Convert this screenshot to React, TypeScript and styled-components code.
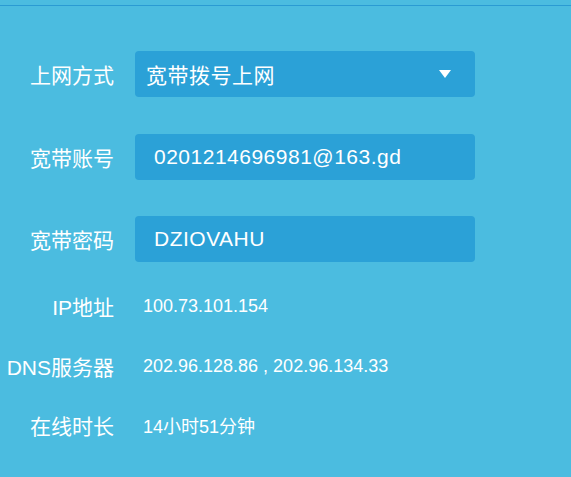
import React from "react";
import styled, { createGlobalStyle } from "styled-components";

const GlobalStyle = createGlobalStyle`
  html, body {
    margin: 0;
    padding: 0;
    background: #4bbce0;
  }
  body {
    width: 571px;
    height: 477px;
    overflow: hidden;
    font-family: "Liberation Sans", "Noto Sans CJK SC", sans-serif;
    color: #ffffff;
  }
`;

const ScPage = styled.div`
  width: 571px;
  height: 477px;
  background: #4bbce0;
  padding-top: 5px;
  box-sizing: border-box;
`;

const ScTopLine = styled.div`
  height: 1px;
  background: #2a9bd3;
`;

const ScForm = styled.div`
  display: flex;
  flex-direction: column;
`;

const ScRow = styled.div<{ $top: number; $height: number }>`
  display: grid;
  grid-template-columns: 114px 340px;
  column-gap: 21px;
  align-items: center;
  margin-top: ${(p) => p.$top}px;
  height: ${(p) => p.$height}px;
`;

const ScLabel = styled.div`
  text-align: right;
  font-size: 21px;
  white-space: nowrap;
`;

const ScBox = styled.div<{ $pad: number }>`
  position: relative;
  height: 46px;
  display: flex;
  align-items: center;
  padding-left: ${(p) => p.$pad}px;
  background: #2ba1d7;
  border-radius: 4px;
  font-size: 21px;
  letter-spacing: 0.5px;
  white-space: nowrap;
`;

const ScArrow = styled.span`
  position: absolute;
  right: 24px;
  top: 19px;
  width: 0;
  height: 0;
  border-left: 6.5px solid transparent;
  border-right: 6.5px solid transparent;
  border-top: 8px solid #ffffff;
`;

const ScValue = styled.div`
  padding-left: 8px;
  font-size: 18px;
  white-space: nowrap;
`;

const boxRows = [
  { label: "上网方式", value: "宽带拨号上网", top: 45, pad: 11, select: true },
  { label: "宽带账号", value: "0201214696981@163.gd", top: 37, pad: 19 },
  { label: "宽带密码", value: "DZIOVAHU", top: 36, pad: 19 },
];

const infoRows = [
  { label: "IP地址", value: "100.73.101.154", top: 24 },
  { label: "DNS服务器", value: "202.96.128.86 , 202.96.134.33", top: 20 },
  { label: "在线时长", value: "14小时51分钟", top: 19 },
];

const App = () => {
  return (
    <>
      <GlobalStyle />
      <ScPage>
        <ScTopLine />
        <ScForm>
          {boxRows.map((row) => (
            <ScRow key={row.label} $top={row.top} $height={46}>
              <ScLabel>{row.label}</ScLabel>
              <ScBox $pad={row.pad}>
                {row.value}
                {row.select && <ScArrow />}
              </ScBox>
            </ScRow>
          ))}
          {infoRows.map((row) => (
            <ScRow key={row.label} $top={row.top} $height={40}>
              <ScLabel>{row.label}</ScLabel>
              <ScValue>{row.value}</ScValue>
            </ScRow>
          ))}
        </ScForm>
      </ScPage>
    </>
  );
};

export default App;
